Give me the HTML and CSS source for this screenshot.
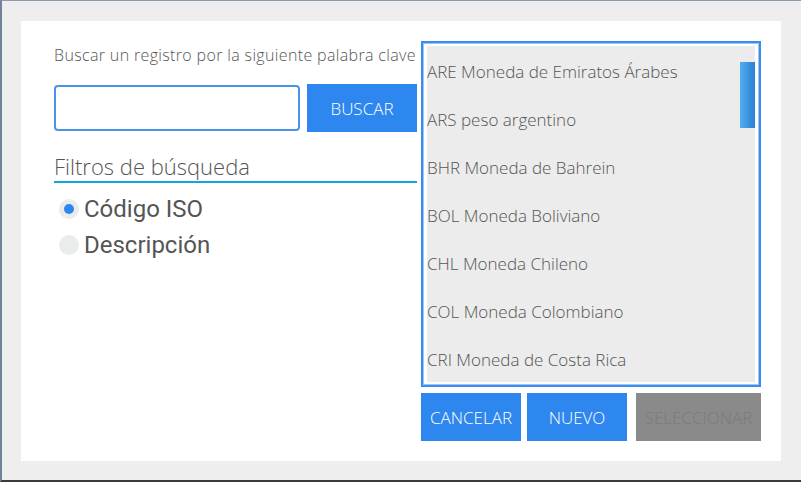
FILE: index.html
```html
<!DOCTYPE html>
<html lang="es">
<head>
<meta charset="utf-8">
<link rel="stylesheet" href="styles.css">
</head>
<body>
<div class="frame">
  <div class="panel">
    <div class="left">
      <div class="prompt">Buscar un registro por la siguiente palabra clave</div>
      <div class="search-row">
        <input class="search-input" type="text">
        <button class="btn btn-search">BUSCAR</button>
      </div>
      <div class="filters-title">Filtros de búsqueda</div>
      <div class="radios">
        <div class="radio-row"><span class="radio checked"></span><span class="radio-label">Código ISO</span></div>
        <div class="radio-row"><span class="radio"></span><span class="radio-label">Descripción</span></div>
      </div>
    </div>
    <div class="right">
      <div class="listbox">
        <div class="list">
          <div class="item">ARE Moneda de Emiratos Árabes</div>
          <div class="item">ARS peso argentino</div>
          <div class="item">BHR Moneda de Bahrein</div>
          <div class="item">BOL Moneda Boliviano</div>
          <div class="item">CHL Moneda Chileno</div>
          <div class="item">COL Moneda Colombiano</div>
          <div class="item">CRI Moneda de Costa Rica</div>
        </div>
        <div class="thumb"></div>
      </div>
      <div class="actions">
        <button class="btn btn-action">CANCELAR</button>
        <button class="btn btn-action">NUEVO</button>
        <button class="btn btn-disabled">SELECCIONAR</button>
      </div>
    </div>
  </div>
</div>
</body>
</html>
```

FILE: styles.css
```css
html, body {
  margin: 0;
  padding: 0;
}
body {
  width: 801px;
  height: 482px;
  overflow: hidden;
  font-family: "Open Sans", "Noto Sans", sans-serif;
}
.frame {
  box-sizing: border-box;
  width: 801px;
  height: 482px;
  background: #eeeeee;
  border-left: 2px solid #6e8398;
  border-top: 1px solid #8b9bab;
  border-bottom: 2px solid #3a3a3a;
  padding: 20px 0 0 19px;
}
.panel {
  box-sizing: border-box;
  width: 760px;
  height: 440px;
  background: #ffffff;
  display: flex;
  padding: 20px 0 0 33px;
  gap: 4px;
}
.left {
  width: 363px;
  display: flex;
  flex-direction: column;
}
.prompt {
  font-size: 16px;
  font-weight: 300;
  letter-spacing: 0.35px;
  color: #555555;
  line-height: 20px;
  margin-top: 4px;
  white-space: nowrap;
}
.search-row {
  display: flex;
  align-items: center;
  gap: 7px;
  margin-top: 19px;
}
.search-input {
  box-sizing: border-box;
  width: 246px;
  height: 46px;
  border: 2px solid #4a93ea;
  border-radius: 4px;
  margin: 0;
  padding: 0 8px;
  background: #fff;
  outline: none;
}
.btn {
  border: none;
  margin: 0;
  padding: 0;
  font-family: "Open Sans", "Noto Sans", sans-serif;
  font-weight: 300;
  font-size: 17px;
  color: #ffffff;
  background: #2e87ee;
  height: 48px;
  cursor: pointer;
}
.btn-search {
  width: 110px;
}
.filters-title {
  margin-top: 20px;
  font-size: 22px;
  font-weight: 300;
  color: #555555;
  line-height: 29px;
  border-bottom: 2px solid #0ea5e0;
}
.radios {
  display: flex;
  flex-direction: column;
  gap: 16px;
  margin-top: 16px;
  padding-left: 5px;
}
.radio-row {
  display: flex;
  align-items: center;
  height: 20px;
  gap: 5px;
}
.radio {
  width: 20px;
  height: 20px;
  border-radius: 50%;
  background: #eaebeb;
  display: flex;
  align-items: center;
  justify-content: center;
  flex: none;
}
.radio.checked::after {
  content: "";
  width: 10px;
  height: 10px;
  border-radius: 50%;
  background: #2d86ee;
}
.radio-label {
  font-family: Roboto, sans-serif;
  font-size: 24px;
  color: #555555;
  line-height: 20px;
}
.right {
  width: 340px;
  display: flex;
  flex-direction: column;
  gap: 6px;
}
.listbox {
  position: relative;
  box-sizing: border-box;
  height: 346px;
  border: 2px solid #3a8cf0;
  box-shadow: inset 0 0 0 1px #9cc6f6;
  padding: 3px 4px 3px 4px;
  background: #ffffff;
}
.list {
  height: 100%;
  background: #ebeceb;
  overflow: hidden;
  padding-top: 2px;
  box-sizing: border-box;
}
.item {
  height: 48px;
  line-height: 48px;
  font-size: 17px;
  font-weight: 300;
  color: #555555;
  white-space: nowrap;
}
.thumb {
  position: absolute;
  left: 317px;
  top: 19px;
  width: 15px;
  height: 66px;
  background: linear-gradient(to right, #52aef0, #2a7fd2);
}
.actions {
  display: flex;
  gap: 6px;
}
.btn-action {
  width: 100px;
}
.btn-disabled {
  width: 125px;
  margin-left: 3px;
  background: #8a8a8a;
  color: #7a7a7a;
}
```
